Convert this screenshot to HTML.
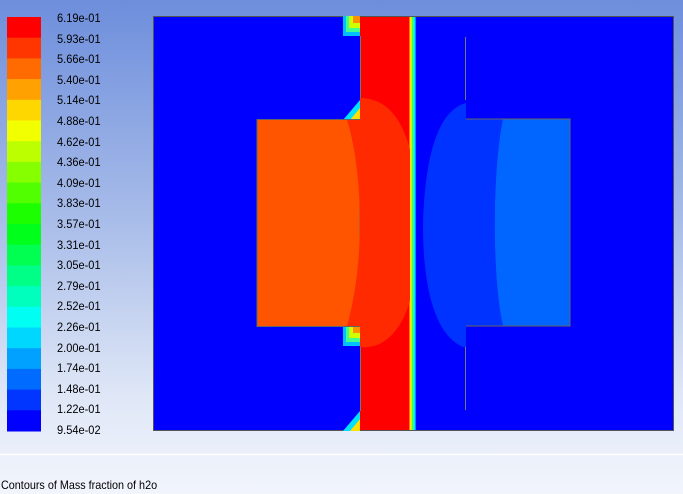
<!DOCTYPE html>
<html><head><meta charset="utf-8"><style>
html,body{margin:0;padding:0}
body{width:683px;height:494px;position:relative;overflow:hidden;font-family:"Liberation Sans",sans-serif;
background:linear-gradient(to bottom,#6d8edc 0%,#a9bde9 45%,#dfe7f7 80%,#f2f5fc 100%);}
.lab{position:absolute;left:57px;font-size:12px;color:#000;line-height:14px;transform:scaleX(0.92);transform-origin:left}
</style></head><body>
<svg width="683" height="494" style="position:absolute;left:0;top:0">
<g id="bar"></g>
<line x1="0" y1="454.5" x2="683" y2="454.5" stroke="#ffffff" stroke-width="1.5"/>
<rect x="153.5" y="16.5" width="520" height="414" fill="#0000ff" stroke="#555" stroke-width="1"/>
<defs><linearGradient id="st" x1="0" x2="1"><stop offset="0" stop-color="#ff4000"/><stop offset="0.25" stop-color="#ffff00"/><stop offset="0.5" stop-color="#40ff40"/><stop offset="0.75" stop-color="#00ffff"/><stop offset="1" stop-color="#0060ff"/></linearGradient></defs>
<!-- corners -->
<g>
<rect x="343" y="16" width="17" height="20" fill="#00c0ff"/><rect x="346" y="16" width="14" height="16" fill="#40ff90"/><rect x="349" y="16" width="11" height="12" fill="#d0ff00"/><rect x="353" y="16" width="7" height="7" fill="#ff9000"/>
<rect x="343" y="326" width="17" height="20" fill="#00c0ff"/><rect x="346" y="326" width="14" height="16" fill="#40ff90"/><rect x="349" y="326" width="11" height="12" fill="#d0ff00"/><rect x="353" y="326" width="7" height="7" fill="#ff9000"/>
<polygon points="343,120 360,100 360,120" fill="#00e0ff"/><polygon points="350,120 360,108 360,120" fill="#ffe000"/>
<polygon points="343,431 360,411 360,431" fill="#00e0ff"/><polygon points="350,431 360,419 360,431" fill="#ffe000"/>
</g>
<rect x="360" y="17" width="50" height="413" fill="#ff0000"/>
<rect x="409" y="17" width="7" height="413" fill="url(#st)"/>
<rect x="257" y="119.5" width="103" height="207" fill="#ff5500" stroke="#666" stroke-width="1"/>
<path d="M347,120 C360,160 368,250 347,326 L360,326 L360,347 C390,350 405,320 410,300 L410,150 C400,110 380,98 360,98 L360,120 Z" fill="#ff2a00"/>
<path d="M466,103 C440,110 425,150 423,225 C423,300 440,340 466,348 L466,326 L503,326 C492,280 492,170 503,119 L466,119 Z" fill="#0033ff"/>
<path d="M503,119 L570,119 L570,326 L503,326 C492,280 492,170 503,119 Z" fill="#0066ff"/>
<path d="M466,119 H570 V326 H466" fill="none" stroke="#666" stroke-width="1"/>
<line x1="465.5" y1="37" x2="465.5" y2="100" stroke="#777"/>
<line x1="465.5" y1="347" x2="465.5" y2="410" stroke="#777"/>
<line x1="360.5" y1="36" x2="360.5" y2="98" stroke="#777"/>
<line x1="360.5" y1="347" x2="360.5" y2="411" stroke="#777"/>
</svg>
<div id="labs"></div>
<div style="position:absolute;left:1px;top:478px;font-size:12px;transform:scaleX(0.9);transform-origin:left">Contours of Mass fraction of h2o</div>
<script>
var g=document.getElementById('bar'),s='';
for(var i=0;i<20;i++){var y=17+i*20.7;s+='<rect x="7" y="'+y.toFixed(1)+'" width="34" height="21.2" fill="hsl('+(i*240/19)+',100%,50%)"/>';}
g.innerHTML=s;
var L=["6.19e-01","5.93e-01","5.66e-01","5.40e-01","5.14e-01","4.88e-01","4.62e-01","4.36e-01","4.09e-01","3.83e-01","3.57e-01","3.31e-01","3.05e-01","2.79e-01","2.52e-01","2.26e-01","2.00e-01","1.74e-01","1.48e-01","1.22e-01","9.54e-02"],h='';
for(var j=0;j<21;j++){h+='<div class="lab" style="top:'+(11+j*20.6).toFixed(1)+'px">'+L[j]+'</div>';}
document.getElementById('labs').innerHTML=h;
</script>
</body></html>
